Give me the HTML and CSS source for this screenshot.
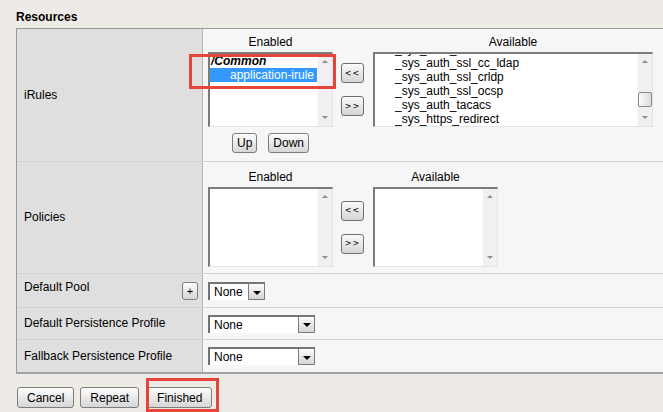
FILE: index.html
```html
<!DOCTYPE html>
<html lang="en">
<head>
    <meta charset="UTF-8">
    <title>Resources</title>
    <link rel="stylesheet" href="styles.css">
</head>
<body>
<div class="page">
    <h3 class="section-title">Resources</h3>

    <div class="props">
        <!-- iRules -->
        <div class="prop-row row-irules">
            <div class="prop-label">iRules</div>
            <div class="prop-field">
                <div class="dual">
                    <div class="dual-head head-enabled">Enabled</div>
                    <div class="dual-head head-avail">Available</div>
                    <div class="listbox box-enabled">
                        <div class="items">
                            <div class="item item-group">/Common</div>
                            <div class="item item-indent selected">application-irule</div>
                        </div>
                        <div class="scrollbar"><span class="arr-up"></span><span class="arr-down"></span></div>
                    </div>
                    <div class="movers">
                        <button class="mini-btn" type="button">&lt;&lt;</button>
                        <button class="mini-btn" type="button">&gt;&gt;</button>
                    </div>
                    <div class="listbox box-avail list-avail-wide">
                        <div class="items">
                            <div class="item item-indent item-clipped">_sys_auth_radius</div>
                            <div class="item item-indent">_sys_auth_ssl_cc_ldap</div>
                            <div class="item item-indent">_sys_auth_ssl_crldp</div>
                            <div class="item item-indent">_sys_auth_ssl_ocsp</div>
                            <div class="item item-indent">_sys_auth_tacacs</div>
                            <div class="item item-indent">_sys_https_redirect</div>
                        </div>
                        <div class="scrollbar"><span class="arr-up"></span><span class="thumb"></span><span class="arr-down"></span></div>
                    </div>
                    <div class="order-btns">
                        <button class="btn btn-small" type="button">Up</button>
                        <button class="btn btn-small" type="button">Down</button>
                    </div>
                </div>
            </div>
        </div>

        <!-- Policies -->
        <div class="prop-row row-policies">
            <div class="prop-label">Policies</div>
            <div class="prop-field">
                <div class="dual">
                    <div class="dual-head head-enabled">Enabled</div>
                    <div class="dual-head head-avail">Available</div>
                    <div class="listbox box-enabled list-tall">
                        <div class="items"></div>
                        <div class="scrollbar"><span class="arr-up"></span><span class="arr-down"></span></div>
                    </div>
                    <div class="movers">
                        <button class="mini-btn" type="button">&lt;&lt;</button>
                        <button class="mini-btn" type="button">&gt;&gt;</button>
                    </div>
                    <div class="listbox box-avail list-tall">
                        <div class="items"></div>
                        <div class="scrollbar"><span class="arr-up"></span><span class="arr-down"></span></div>
                    </div>
                </div>
            </div>
        </div>

        <!-- Default Pool -->
        <div class="prop-row row-pool">
            <div class="prop-label label-top">
                <span>Default Pool</span>
                <button class="plus-btn" type="button">+</button>
            </div>
            <div class="prop-field field-top">
                <div class="dropdown dropdown-short">
                    <span class="dropdown-value">None</span>
                    <span class="dropdown-arrow"></span>
                </div>
            </div>
        </div>

        <div class="prop-row row-select">
            <div class="prop-label">Default Persistence Profile</div>
            <div class="prop-field field-middle">
                <div class="dropdown">
                    <span class="dropdown-value">None</span>
                    <span class="dropdown-arrow"></span>
                </div>
            </div>
        </div>

        <div class="prop-row row-select row-last">
            <div class="prop-label">Fallback Persistence Profile</div>
            <div class="prop-field field-middle">
                <div class="dropdown">
                    <span class="dropdown-value">None</span>
                    <span class="dropdown-arrow"></span>
                </div>
            </div>
        </div>
    </div>

    <div class="actions">
        <button class="btn btn-action" type="button">Cancel</button>
        <button class="btn btn-action" type="button">Repeat</button>
        <button class="btn btn-action btn-finished" type="button">Finished</button>
    </div>

    <!-- red callouts drawn over the screenshot -->
    <div class="callout callout-list"></div>
    <div class="callout callout-finish"></div>
</div>
</body>
</html>
```

FILE: styles.css
```css
* { box-sizing: border-box; }
html, body {
    margin: 0;
    padding: 0;
    overflow: hidden;
}
body {
    font-family: "Liberation Sans", Arial, sans-serif;
    font-size: 12px;
    color: #000;
    background-color: #eeebe6;
}
.page {
    position: relative;
    width: 663px;
    height: 412px;
}
.section-title {
    margin: 0;
    padding: 10px 0 0 16px;
    height: 28px;
    font-size: 12px;
    line-height: 15px;
    font-weight: bold;
}

/* Properties table */
.props {
    margin-left: 16px;
    border-top: 1px solid #9a9a9a;
    border-left: 1px solid #9a9a9a;
    border-bottom: 2px solid #a3a3a3;
}
.prop-row {
    display: grid;
    grid-template-columns: 186px 1fr;
    border-top: 1px solid #d3d3d3;
}
.row-irules { height: 132px; border-top: none; }
.row-policies { height: 112px; }
.row-pool { height: 34px; }
.row-select { height: 32px; }
.row-last { height: 33px; }
.prop-label {
    display: flex;
    align-items: center;
    padding-left: 7px;
    background-color: #dfdfdf;
    border-right: 1px solid #b4b4b4;
    line-height: 15px;
}
.label-top {
    align-items: flex-start;
    justify-content: space-between;
    padding-top: 6px;
    padding-right: 4px;
}
.prop-field {
    background-color: #f6f6f6;
    padding-left: 5px;
}
.row-irules .prop-field { padding-top: 6px; }
.row-policies .prop-field { padding-top: 8px; }
.field-top { padding-top: 8px; }
.field-middle {
    display: flex;
    align-items: center;
}

/* Dual list (enabled / available) */
.dual {
    display: grid;
    grid-template-columns: 125px 24px auto;
    grid-template-rows: 17px auto auto;
    column-gap: 8px;
    justify-content: start;
}
.dual-head {
    text-align: center;
    line-height: 15px;
}
.head-enabled { grid-row: 1; grid-column: 1; }
.head-avail { grid-row: 1; grid-column: 3; }
.box-enabled { grid-row: 2; grid-column: 1; }
.box-avail { grid-row: 2; grid-column: 3; }
.listbox {
    display: flex;
    width: 125px;
    height: 75px;
    background-color: #fff;
    border-top: 2px solid #7b7b7b;
    border-left: 2px solid #7b7b7b;
    border-right: 1px solid #e4e4e4;
    border-bottom: 1px solid #e4e4e4;
    overflow: hidden;
}
.list-avail-wide { width: 280px; }
.list-tall { height: 80px; }
.items {
    flex: 1;
    overflow: hidden;
}
.item {
    height: 14px;
    line-height: 14px;
    padding-left: 1px;
    white-space: nowrap;
}
.item-group {
    font-weight: bold;
    font-style: italic;
}
.item-indent { padding-left: 20px; }
.item.selected {
    background-color: #3399ff;
    color: #fff;
}
.item-clipped { margin-top: -12px; }
.scrollbar {
    display: flex;
    flex-direction: column;
    align-items: center;
    width: 15px;
    padding: 6px 0 7px;
    background-color: #f1eff1;
    border-left: 1px solid #fbfafb;
}
.arr-up, .arr-down {
    width: 0;
    height: 0;
    border-left: 3px solid transparent;
    border-right: 3px solid transparent;
}
.arr-up { border-bottom: 3px solid #8d8d8d; }
.arr-down {
    margin-top: auto;
    border-top: 3px solid #8d8d8d;
}
.thumb {
    width: 14px;
    height: 15px;
    margin-top: auto;
    border: 1px solid #8a8a8a;
    border-radius: 2px;
    background: linear-gradient(to right, #fafafa, #dcdcdc);
}
.thumb + .arr-down { margin-top: 9px; }

.movers {
    grid-row: 2;
    grid-column: 2;
    display: flex;
    flex-direction: column;
    justify-content: center;
    gap: 13px;
}
.mini-btn {
    width: 23px;
    height: 20px;
    padding: 0;
    font-family: "DejaVu Sans", sans-serif;
    font-size: 8px;
    letter-spacing: 1px;
    color: #000;
    border: 1px solid #6e6e6e;
    border-radius: 3px;
    background: linear-gradient(#fbfbfb, #d4d4d4);
}

.order-btns {
    grid-row: 3;
    grid-column: 1;
    display: flex;
    justify-content: center;
    gap: 11px;
    margin-top: 6px;
}

/* Buttons */
.btn {
    padding: 0;
    font-family: "Liberation Sans", Arial, sans-serif;
    font-size: 12px;
    color: #000;
    border: 1px solid #7d7d7d;
    border-radius: 3px;
    background: linear-gradient(#fdfdfd, #d6d6d6);
}
.btn-small {
    height: 20px;
    padding: 0 4px;
}
.plus-btn {
    width: 16px;
    height: 18px;
    margin-top: 2px;
    padding: 0;
    font-family: "Liberation Sans", Arial, sans-serif;
    font-size: 11px;
    border: 1px solid #7d7d7d;
    border-radius: 3px;
    background: linear-gradient(#fdfdfd, #d6d6d6);
}
.actions {
    display: flex;
    gap: 6px;
    padding: 13px 0 0 17px;
}
.btn-action {
    height: 21px;
    padding: 0 9px;
}
.btn-finished { margin-left: 2px; }

/* Select-like dropdowns */
.dropdown {
    display: flex;
    width: 107px;
    height: 18px;
    background-color: #fff;
    border-top: 2px solid #737373;
    border-left: 2px solid #737373;
}
.dropdown-short { width: 57px; }
.dropdown-value {
    flex: 1;
    padding-left: 4px;
    line-height: 16px;
    font-size: 12px;
}
.dropdown-arrow {
    display: flex;
    align-items: center;
    justify-content: center;
    width: 17px;
    margin-top: -1px;
    border: 1px solid #7a7a7a;
    background: linear-gradient(#fcfcfc, #d5d5d5);
}
.dropdown-arrow::after {
    content: "";
    border-left: 4px solid transparent;
    border-right: 4px solid transparent;
    border-top: 4px solid #000;
    margin-top: 2px;
}

/* Annotation boxes */
.callout {
    position: absolute;
    border: 3px solid #e5443a;
}
.callout-list {
    left: 189px;
    top: 54px;
    width: 147px;
    height: 35px;
}
.callout-finish {
    left: 146px;
    top: 378px;
    width: 73px;
    height: 34px;
}
```
